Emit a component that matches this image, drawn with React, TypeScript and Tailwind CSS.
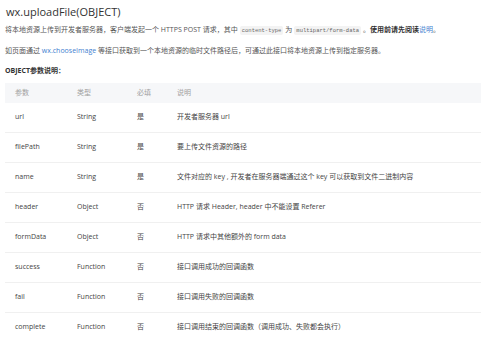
import React from 'react';

type Param = {
  name: string
  type: string
  required: string
  desc: string
}

const params: Param[] = [
  { name: 'url', type: 'String', required: '是', desc: '开发者服务器 url' },
  { name: 'filePath', type: 'String', required: '是', desc: '要上传文件资源的路径' },
  { name: 'name', type: 'String', required: '是', desc: '文件对应的 key , 开发者在服务器端通过这个 key 可以获取到文件二进制内容' },
  { name: 'header', type: 'Object', required: '否', desc: 'HTTP 请求 Header, header 中不能设置 Referer' },
  { name: 'formData', type: 'Object', required: '否', desc: 'HTTP 请求中其他额外的 form data' },
  { name: 'success', type: 'Function', required: '否', desc: '接口调用成功的回调函数' },
  { name: 'fail', type: 'Function', required: '否', desc: '接口调用失败的回调函数' },
  { name: 'complete', type: 'Function', required: '否', desc: '接口调用结束的回调函数（调用成功、失败都会执行）' },
]

const Code = ({ children }: { children: React.ReactNode }) => (
  <code className="mx-[2px] rounded-[2px] bg-[#f3f3f3] px-[2px] py-[1px] font-['Liberation_Mono',monospace] text-[5.5px] text-[#666]">
    {children}
  </code>
)

const App = () => {
  return (
    <div className="h-[342px] w-[500px] overflow-hidden bg-white pl-[5px] pr-[19px] font-['Open_Sans','Noto_Sans_CJK_SC',sans-serif] text-[7px] text-[#555]">
      <h1 className="h-[23px] pl-[1px] text-[11px] leading-[24px] font-normal text-[#333]">wx.uploadFile(OBJECT)</h1>

      <p className="h-[14px] whitespace-nowrap leading-[14px]">
        将本地资源上传到开发者服务器，客户端发起一个 HTTPS POST 请求，其中
        <Code>content-type</Code>为<Code>multipart/form-data</Code>
        。<b className="font-bold text-[#333]">使用前请先阅读</b>
        <a className="text-[#3f7fd0]">说明</a>。
      </p>

      <p className="mt-[7px] h-[14px] whitespace-nowrap leading-[14px]">
        如页面通过 <a className="text-[#3f7fd0]">wx.chooseImage</a> 等接口获取到一个本地资源的临时文件路径后，可通过此接口将本地资源上传到指定服务器。
      </p>

      <h3 className="mt-[6px] h-[14px] text-[7px] leading-[14px] font-bold text-[#333]">OBJECT参数说明：</h3>

      {/* params table */}
      <div className="mt-[5px]">
        <div className="grid h-[20px] grid-cols-[62px_60px_40px_1fr] items-center bg-[#f6f7f9] text-[#a0a0a0]">
          <div className="pl-[10px]">参数</div>
          <div className="pl-[10px]">类型</div>
          <div className="pl-[10px]">必填</div>
          <div className="pl-[10px]">说明</div>
        </div>
        {params.map((p) => (
          <div
            key={p.name}
            className="grid h-[30px] grid-cols-[62px_60px_40px_1fr] items-center border-b border-[#f0f0f0] text-[#444]"
          >
            <div className="pl-[10px]">{p.name}</div>
            <div className="pl-[10px]">{p.type}</div>
            <div className="pl-[10px]">{p.required}</div>
            <div className="whitespace-nowrap pl-[10px]">{p.desc}</div>
          </div>
        ))}
      </div>
    </div>
  );
};

export default App;
